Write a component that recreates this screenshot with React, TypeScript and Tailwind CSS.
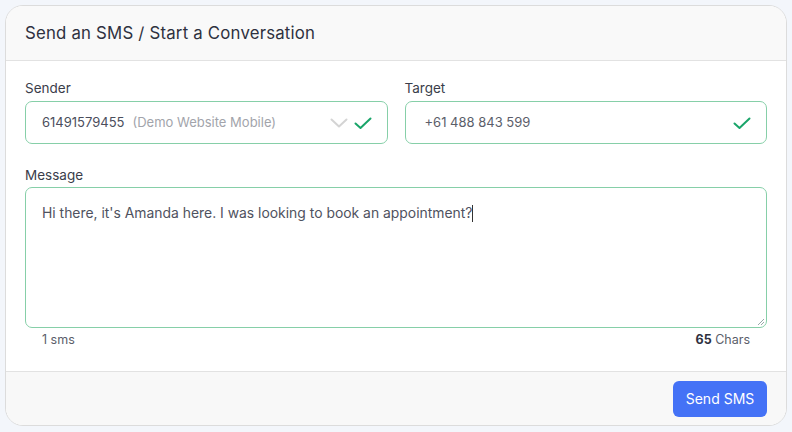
import React from "react";

const Check = () => (
  <svg width="20" height="20" viewBox="0 0 20 20" fill="none">
    <path d="M2.5 10.5 L7.5 15 L17.5 5.5" stroke="#1aa56a" strokeWidth="2" strokeLinecap="round" strokeLinejoin="round" />
  </svg>
);

const Chevron = () => (
  <svg width="18" height="12" viewBox="0 0 18 12" fill="none">
    <path d="M1.5 2.5 L9 9.5 L16.5 2.5" stroke="#d4d4d4" strokeWidth="2" strokeLinecap="round" strokeLinejoin="round" />
  </svg>
);

export default function App() {
  return (
    <div
      className="w-[792px] h-[432px] bg-[#f3f6fb] p-[5px]"
      style={{ fontFamily: "Inter, 'Open Sans', sans-serif" }}
    >
      <div className="w-[782px] h-[421px] bg-white border border-[#dcdcdc] rounded-[18px] overflow-hidden flex flex-col">
        <div className="h-[55px] bg-[#f9f9f9] border-b border-[#e2e2e2] flex items-center px-[19px] pt-[2px] shrink-0">
          <h1 className="text-[16.8px] text-[#2e3140] tracking-[0.2px]">Send an SMS / Start a Conversation</h1>
        </div>
        <div className="px-[19px] pt-[18px] flex-1">
          <div className="flex gap-[17px]">
            <div className="w-[363px]">
              <div className="text-[13.5px] text-[#3a3d4a] mb-[4px] leading-[18px]">Sender</div>
              <div className="h-[43px] border border-[#86cfa8] rounded-[7px] flex items-center pl-[16px] pr-[14px]">
                <span className="text-[13px] text-[#4b4e5c]">61491579455</span>
                <span className="text-[13px] text-[#a2a4ab] ml-[8px]">(Demo Website Mobile)</span>
                <span className="flex-1" />
                <Chevron />
                <span className="ml-[5px] flex"><Check /></span>
              </div>
            </div>
            <div className="w-[363px]">
              <div className="text-[13.5px] text-[#3a3d4a] mb-[4px] leading-[18px]">Target</div>
              <div className="h-[43px] border border-[#86cfa8] rounded-[7px] flex items-center pl-[19px] pr-[14px]">
                <span className="text-[13px] text-[#5b5e6a]">+61 488 843 599</span>
                <span className="flex-1" />
                <Check />
              </div>
            </div>
          </div>
          <div className="mt-[22px] text-[13.5px] text-[#3a3d4a] mb-[3px] leading-[18px]">Message</div>
          <div className="h-[141px] border border-[#86cfa8] rounded-[7px] px-[16px] pt-[12px] relative">
            <span className="text-[13.9px] text-[#4f5260]">
              Hi there, it's Amanda here. I was looking to book an appointment?
            </span>
            <span className="inline-block w-[1px] h-[17px] bg-[#333] align-middle" />
            <svg className="absolute right-[1px] bottom-[1px]" width="8" height="8" viewBox="0 0 8 8">
              <path d="M7 1 L1 7 M7 4 L4 7" stroke="#9aa" strokeWidth="1" />
            </svg>
          </div>
          <div className="flex justify-between px-[17px] mt-[3px] text-[12.5px] text-[#5b5e6a]">
            <span>1 sms</span>
            <span><b className="text-[#2e3140] font-bold">65</b> Chars</span>
          </div>
        </div>
        <div className="h-[54px] bg-[#f8f8f8] border-t border-[#e2e2e2] flex items-center justify-end px-[19px] shrink-0">
          <button className="w-[94px] h-[36px] bg-[#4472f6] rounded-[6px] text-white text-[14px]">Send SMS</button>
        </div>
      </div>
    </div>
  );
}
